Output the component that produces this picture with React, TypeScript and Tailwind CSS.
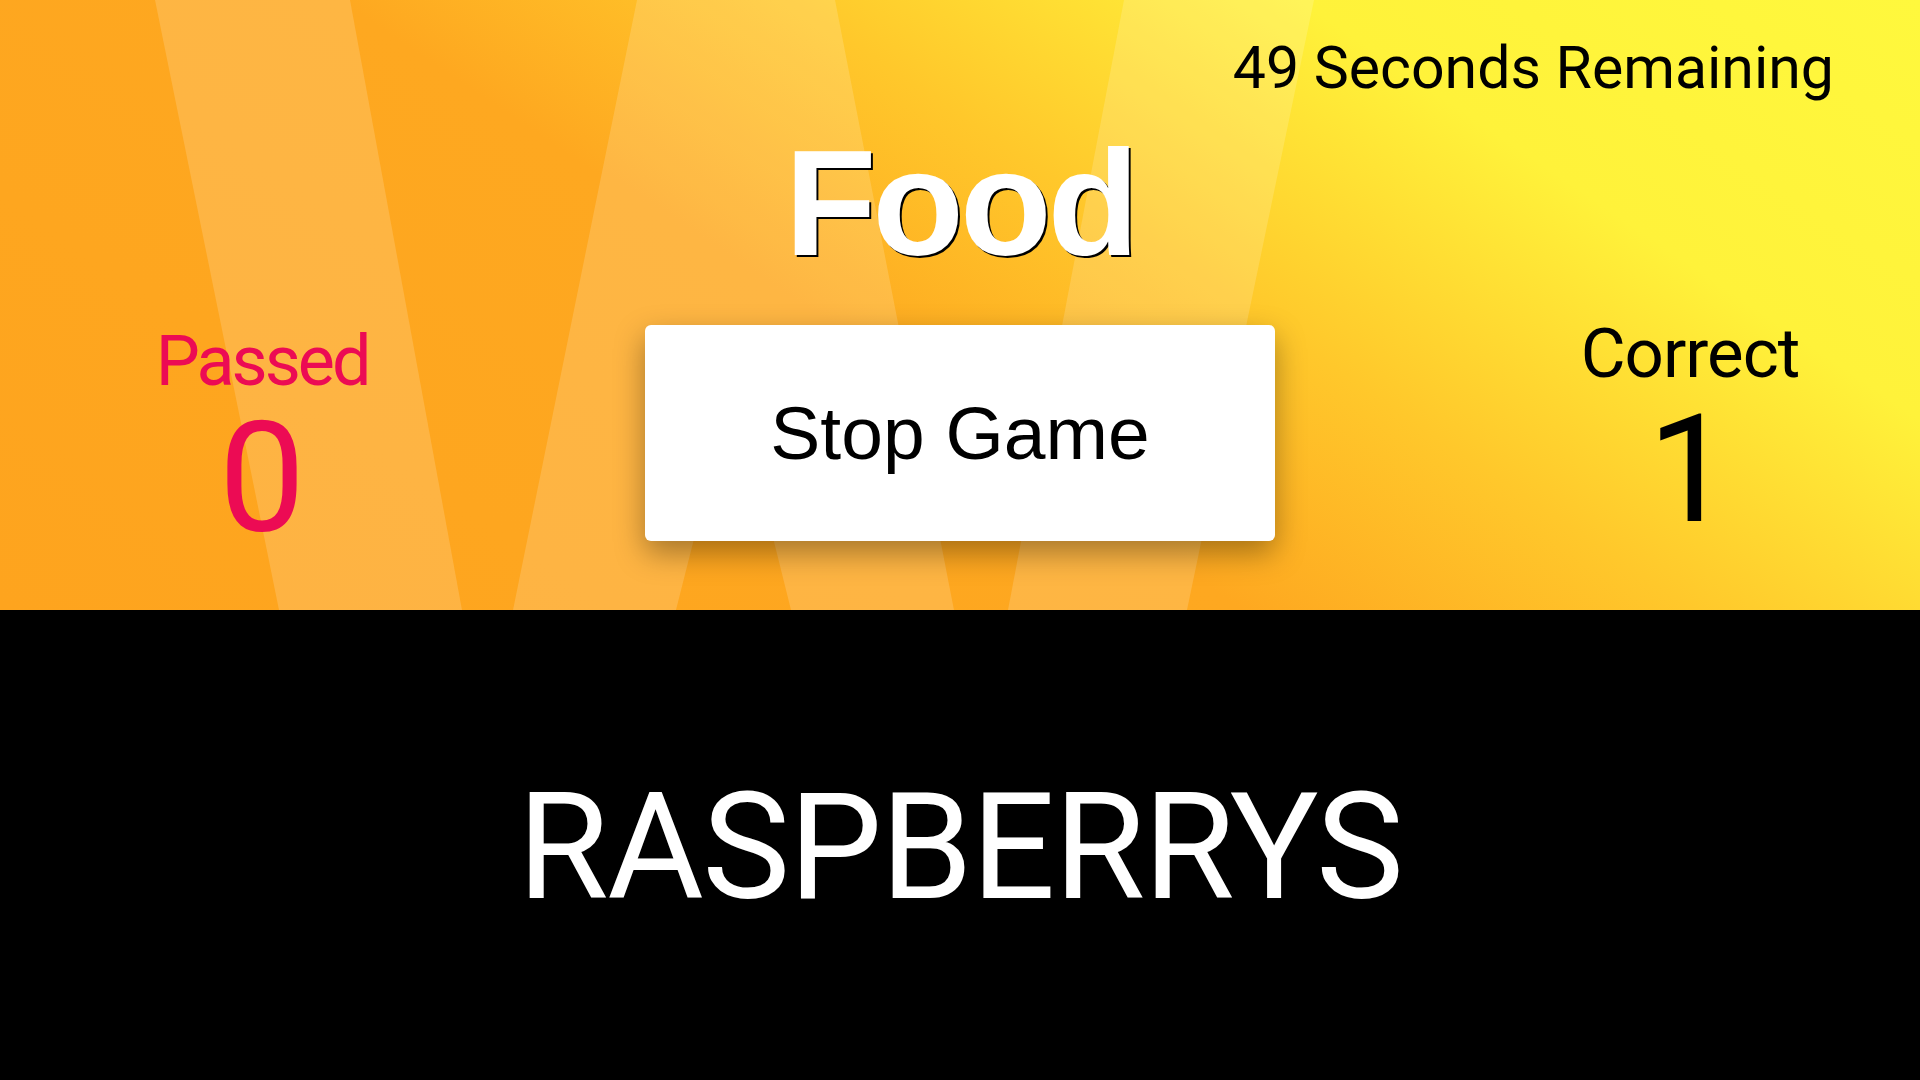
export default function App() {
  return (
    <main className="flex h-[1080px] w-[1920px] flex-col overflow-hidden bg-black">
      {/* top: category, score and timer on the sunburst */}
      <section className="relative h-[610px] w-full overflow-hidden bg-[linear-gradient(34deg,#fea41e_0%,#fea820_44%,#ffc82b_60%,#fff23a_78%,#fff83d_100%)]">
        <svg
          className="pointer-events-none absolute inset-0 h-full w-full"
          viewBox="0 0 1920 610"
          preserveAspectRatio="none"
        >
          <g fill="#ffffff" fillOpacity="0.16">
            <polygon points="155,0 350,0 462,610 279,610" />
            <polygon points="637,0 835,0 954,610 791,610 734,381 676,610 513,610" />
            <polygon points="1124,0 1314,0 1187,610 1008,610" />
          </g>
        </svg>

        <div className="relative flex h-full flex-col">
          <div className="flex justify-end pt-[38px] pr-[86px]">
            <span className="text-[59px] leading-none text-black [font-family:Roboto,'Liberation_Sans',sans-serif]">
              49 Seconds Remaining
            </span>
          </div>

          <div className="flex flex-1">
            <div className="flex w-[524px] flex-col items-center pt-[229px]">
              <span className="text-[70px] leading-none tracking-[-3px] text-[#ec0b54] [font-family:Roboto,'Liberation_Sans',sans-serif]">
                Passed
              </span>
              <span className="mt-[6px] text-[154px] leading-none text-[#ec0b54] [font-family:Roboto,'Liberation_Sans',sans-serif]">
                0
              </span>
            </div>

            <div className="ml-[121px] flex w-[630px] flex-col items-center pt-[31px]">
              <h1 className="text-[150px] font-bold leading-none tracking-[-4px] text-white [font-family:'Liberation_Sans',Arial,sans-serif] [text-shadow:2px_2px_0_#000]">
                Food
              </h1>
              <button className="mt-[47px] flex h-[216px] w-[630px] items-center justify-center rounded-[6px] bg-white shadow-[0_12px_30px_rgba(0,0,0,0.35)]">
                <span className="text-[75px] leading-none text-black [font-family:'Liberation_Sans',Arial,sans-serif]">
                  Stop Game
                </span>
              </button>
            </div>

            <div className="ml-auto flex w-[460px] flex-col items-center pt-[222px]">
              <span className="text-[69px] leading-none tracking-[-1px] text-black [font-family:Roboto,'Liberation_Sans',sans-serif]">
                Correct
              </span>
              <span className="mt-[7px] text-[150px] leading-none text-black [font-family:Roboto,'Liberation_Sans',sans-serif]">
                1
              </span>
            </div>
          </div>
        </div>
      </section>

      {/* bottom: current word */}
      <section className="flex h-[470px] w-full justify-center bg-black pt-[164px]">
        <span className="text-[148px] leading-none tracking-[-1.5px] text-white [font-family:Roboto,'Liberation_Sans',sans-serif]">
          RASPBERRYS
        </span>
      </section>
    </main>
  )
}
